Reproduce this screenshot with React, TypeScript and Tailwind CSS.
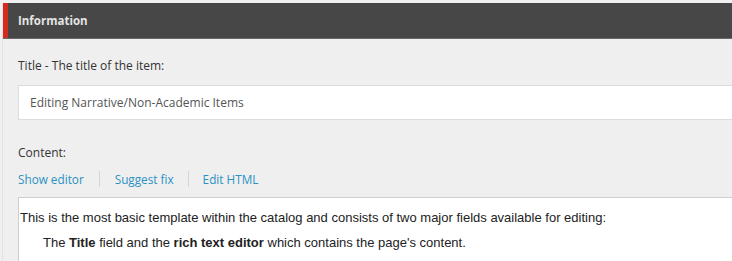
import React from "react";

export default function App() {
  const os = { fontFamily: '"Open Sans", "Noto Sans", sans-serif' };
  return (
    <div className="w-[732px] h-[261px] overflow-hidden bg-[#f0f0f0] pt-[3px] pl-[2px]">
      <div className="h-full border-l border-[#e2e2e2] bg-[#efefef]">
        <div className="flex h-[36px] bg-[#474747] border-b border-[#6b6b6b]">
          <div className="w-[5px] bg-[#d52b1e]" />
          <div className="flex items-center pl-[10px] text-[11.5px] font-bold text-[#e4e4e4]" style={os}>
            Information
          </div>
        </div>
        <div className="pl-[15px]" style={os}>
          <div className="pt-[19px] text-[12px] leading-[16px] text-[#333]">Title - The title of the item:</div>
          <div className="mt-[11px] h-[35px] bg-white border border-[#dcdcdc] border-r-0 flex items-center pl-[11px] text-[12px] text-[#555]">
            Editing Narrative/Non-Academic Items
          </div>
          <div className="pt-[25px] text-[12px] leading-[16px] text-[#333]">Content:</div>
          <div className="mt-[10px] flex items-center text-[11.75px] leading-[16px] text-[#2a92c4]">
            <span>Show editor</span>
            <span className="mx-[15px] h-[16px] w-px bg-[#d6d6d6]" />
            <span>Suggest fix</span>
            <span className="mx-[14px] h-[16px] w-px bg-[#d6d6d6]" />
            <span>Edit HTML</span>
          </div>
          <div
            className="mt-[10px] h-[80px] bg-white border border-[#cfcfcf] border-r-0 pl-[1px] pt-[12px] text-[13px] text-[#222]"
            style={{ fontFamily: '"Liberation Sans", Arial, sans-serif' }}
          >
            <div className="leading-[15px]">
              This is the most basic template within the catalog and consists of two major fields available for editing:
            </div>
            <div className="mt-[10px] pl-[23px] leading-[15px]">
              The <b>Title</b> field and the <b>rich text editor</b> which contains the page's content.
            </div>
          </div>
        </div>
      </div>
    </div>
  );
}
